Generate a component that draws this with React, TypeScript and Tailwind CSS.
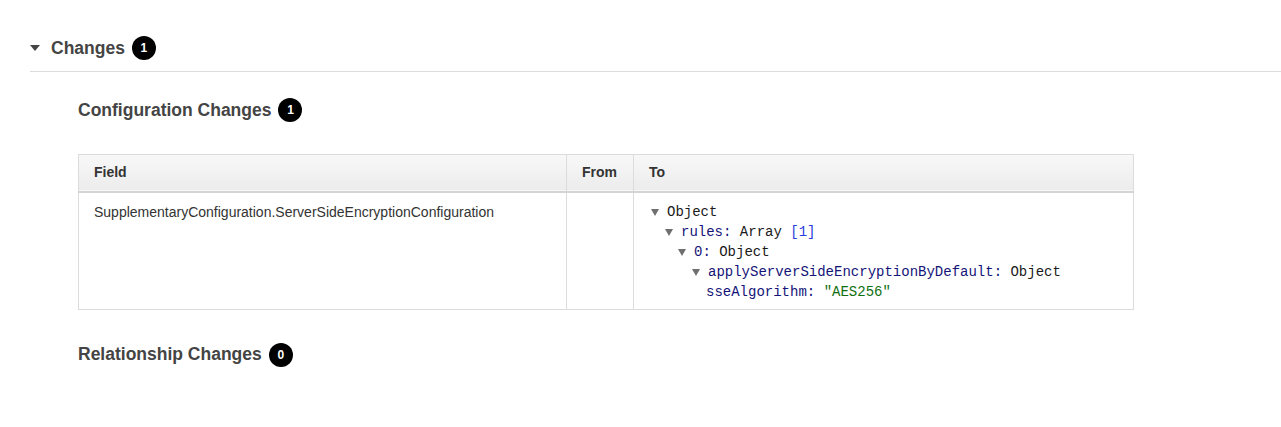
import React from 'react';

const Badge = ({ n }: { n: number }) => (
  <span className="ml-[7px] inline-flex h-[24px] w-[24px] items-center justify-center rounded-full bg-black text-[12px] font-bold text-white">
    {n}
  </span>
);

const Caret = ({ className = '' }: { className?: string }) => (
  <svg width="10" height="6" viewBox="0 0 10 6" className={className}>
    <path d="M0 0 L10 0 L5 6 Z" fill="#444" />
  </svg>
);

const TreeCaret = () => (
  <span className="inline-block w-[16px]">
    <svg width="8" height="7" viewBox="0 0 8 7" className="inline-block align-[0px]">
      <path d="M0 0 L8 0 L4 7 Z" fill="#6f6f6f" />
    </svg>
  </span>
);

type Line = { pad: string; caret: boolean; content: React.ReactNode };

const lines: Line[] = [
  { pad: 'pl-0', caret: true, content: <span className="text-[#1a1a1a]">Object</span> },
  {
    pad: 'pl-[14px]',
    caret: true,
    content: (
      <>
        <span className="text-[#141478]">rules:</span> <span className="text-[#1a1a1a]">Array</span>{' '}
        <span className="text-[#2a3ee0]">[1]</span>
      </>
    ),
  },
  {
    pad: 'pl-[27px]',
    caret: true,
    content: (
      <>
        <span className="text-[#141478]">0:</span> <span className="text-[#1a1a1a]">Object</span>
      </>
    ),
  },
  {
    pad: 'pl-[41px]',
    caret: true,
    content: (
      <>
        <span className="text-[#141478]">applyServerSideEncryptionByDefault:</span>{' '}
        <span className="text-[#1a1a1a]">Object</span>
      </>
    ),
  },
  {
    pad: 'pl-[55px]',
    caret: false,
    content: (
      <>
        <span className="text-[#141478]">sseAlgorithm:</span>{' '}
        <span className="text-[#0f7010]">"AES256"</span>
      </>
    ),
  },
];

const SubHeading = ({ title, n, className = '' }: { title: string; n: number; className?: string }) => (
  <div className={`flex h-[24px] items-center ${className}`}>
    <h3 className="text-[17.5px] font-bold text-[#444]">{title}</h3>
    <Badge n={n} />
  </div>
);

export default function App() {
  return (
    <div className="min-h-[427px] w-full bg-white pt-[36px] pl-[30px] font-['Liberation_Sans',Arial,sans-serif]">
      <div className="border-b border-[#dcdcdc] pb-[11px]">
        <div className="flex h-[24px] items-center">
          <Caret />
          <h2 className="ml-[11px] text-[17.5px] font-bold text-[#444]">Changes</h2>
          <Badge n={1} />
        </div>
      </div>

      <div className="pl-[48px]">
        <SubHeading title="Configuration Changes" n={1} className="mt-[26px]" />

        <table className="mt-[32px] w-[1056px] border-collapse border border-[#dcdcdc] text-[14px] text-[#333]">
          <thead>
            <tr className="h-[37px] border-b-2 border-[#d4d4d4] bg-gradient-to-b from-[#f8f8f8] to-[#ececec]">
              <th className="w-[488px] border-r border-[#dcdcdc] px-[15px] text-left font-bold">Field</th>
              <th className="w-[67px] border-r border-[#dcdcdc] px-[15px] text-left font-bold">From</th>
              <th className="px-[15px] text-left font-bold">To</th>
            </tr>
          </thead>
          <tbody>
            <tr>
              <td className="border-r border-[#dcdcdc] px-[15px] pt-[9px] pb-[7px] align-top leading-[20px]">
                SupplementaryConfiguration.ServerSideEncryptionConfiguration
              </td>
              <td className="border-r border-[#dcdcdc] px-[15px] align-top" />
              <td className="pl-[17px] pr-[15px] pt-[9px] pb-[7px] align-top font-['Liberation_Mono','Courier_New',monospace] text-[14px] leading-[20px]">
                {lines.map((l, i) => (
                  <div key={i} className={`whitespace-pre ${l.pad}`}>
                    {l.caret && <TreeCaret />}
                    {l.content}
                  </div>
                ))}
              </td>
            </tr>
          </tbody>
        </table>

        <SubHeading title="Relationship Changes" n={0} className="mt-[33px]" />
      </div>
    </div>
  );
}
